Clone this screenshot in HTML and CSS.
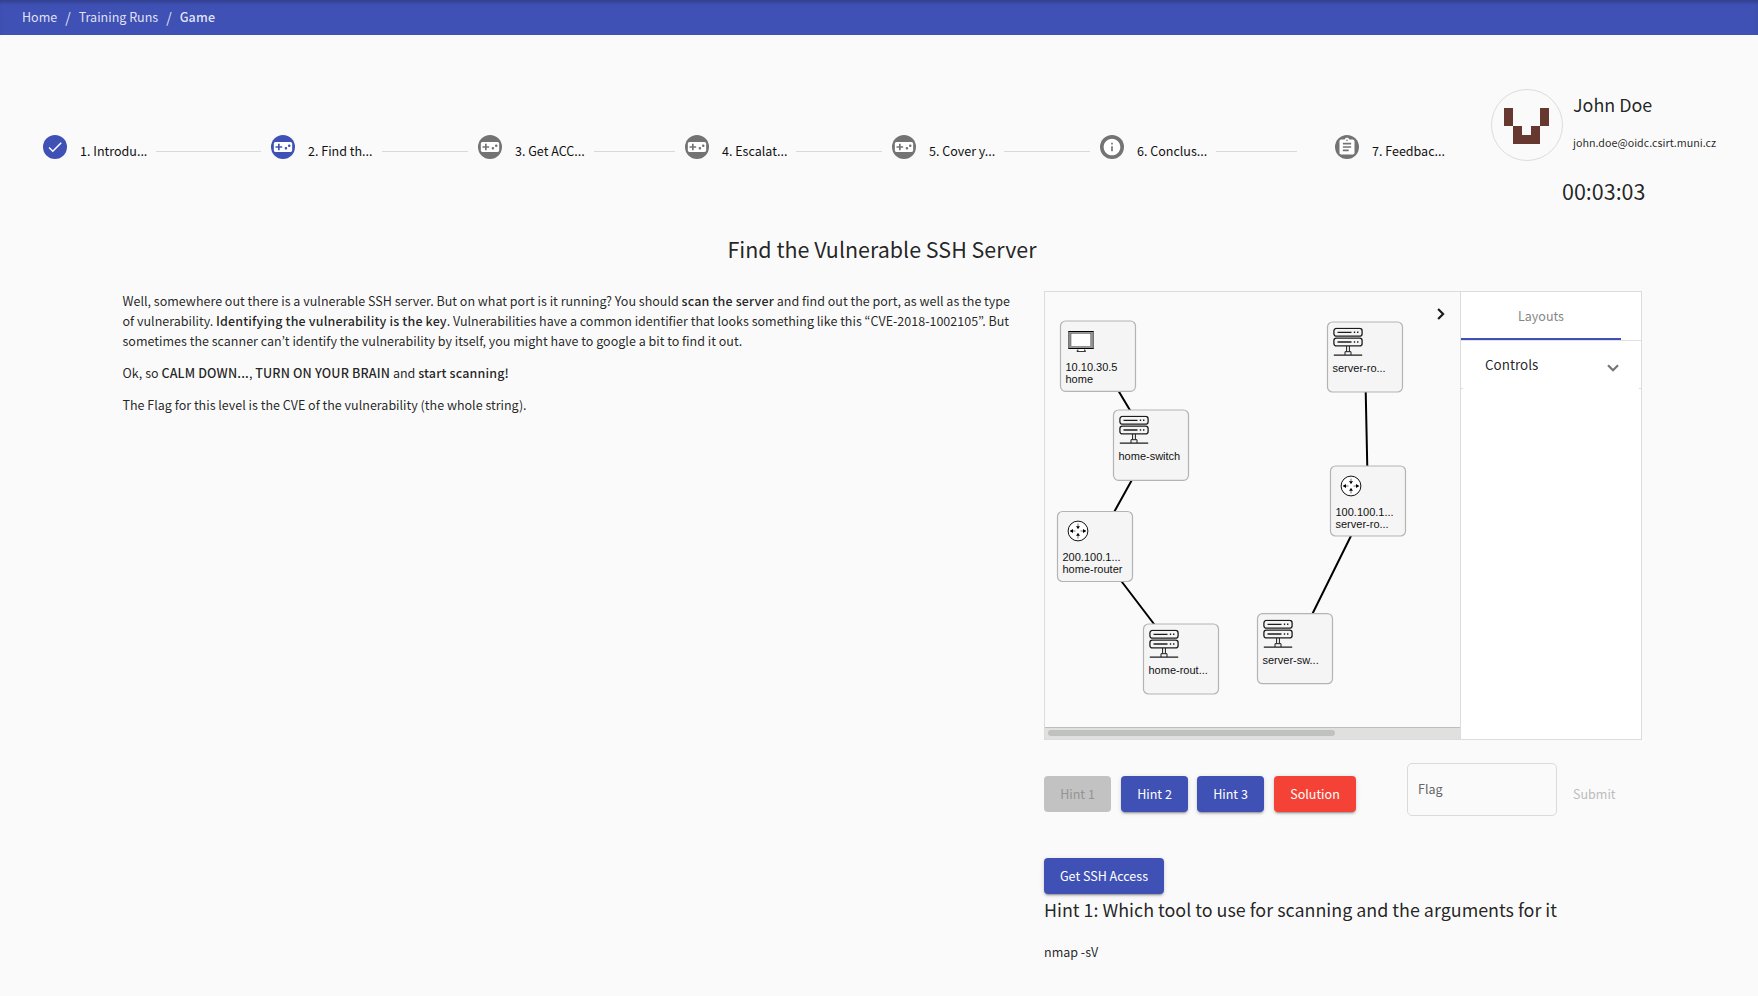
FILE: index.html
```html
<!DOCTYPE html>
<html lang="en">
<head>
<meta charset="utf-8">
<title>Training Run</title>
<link rel="stylesheet" href="styles.css">
</head>
<body>
<svg class="defs" width="0" height="0" aria-hidden="true">
  <symbol id="pad" viewBox="0 0 24 24"><path fill="currentColor" d="M21 6H3c-1.100 0-2 .9-2 2v8c0 1.100.9 2 2 2h18c1.100 0 2-.9 2-2V8c0-1.100-.9-2-2-2zm-10 7H8v3H6v-3H3v-2h3V8h2v3h3v2zm4.500 2c-.83 0-1.500-.67-1.500-1.500s.67-1.500 1.500-1.500 1.500.67 1.500 1.500-.67 1.500-1.500 1.500zm4-3c-.83 0-1.500-.67-1.500-1.500S18.670 9 19.500 9s1.500.67 1.500 1.500-.67 1.500-1.500 1.500z"/></symbol>
  <symbol id="info" viewBox="0 0 24 24"><path fill="currentColor" d="M12 2C6.480 2 2 6.480 2 12s4.480 10 10 10 10-4.480 10-10S17.520 2 12 2zm1 15h-2v-6h2v6zm0-8h-2V7h2v2z"/></symbol>
  <symbol id="clip" viewBox="0 0 24 24"><path fill="currentColor" d="M19 3h-4.180C14.400 1.840 13.300 1 12 1c-1.300 0-2.400.84-2.820 2H5c-1.100 0-2 .9-2 2v14c0 1.100.9 2 2 2h14c1.100 0 2-.9 2-2V5c0-1.100-.9-2-2-2zm-7 0c.55 0 1 .45 1 1s-.45 1-1 1-1-.45-1-1 .45-1 1-1zm2 14H7v-2h7v2zm3-4H7v-2h10v2zm0-4H7V7h10v2z"/></symbol>
  <symbol id="check" viewBox="0 0 24 24"><path fill="currentColor" d="M9 16.170L4.830 12l-1.420 1.410L9 19 21 7l-1.410-1.410z"/></symbol>
  <symbol id="switch" viewBox="0 0 30 29">
    <g fill="none" stroke="#1c1c1c" stroke-width="1.300">
      <rect x=".9" y=".9" width="28.200" height="7.800" rx="2.500"/>
      <rect x=".9" y="10.600" width="28.200" height="7.800" rx="2.500"/>
      <path d="M4.500 4.800h14M4.500 14.500h14M.8 27.700h28.400"/>
      <path stroke-width="1.400" d="M20.800 4.800h1.400M24 4.800h1.400M20.800 14.500h1.400M24 14.500h1.400"/>
      <path stroke-width="1" d="M13.600 18.500v5.500M16.400 18.500v5.500M12 27.500v-3.300h6v3.300"/>
    </g>
  </symbol>
  <symbol id="router" viewBox="0 0 22 22">
    <circle cx="11" cy="11" r="9.900" fill="#fff" stroke="#111"/>
    <path stroke="#777" stroke-width="1" d="M11 3.500v5M11 13.500v5M3.500 11h5M13.500 11h5"/>
    <path d="M9 6.200h4L11 9zM9 15.800h4L11 13zM6 8.900v4.200L2.700 11zM16 8.900v4.200l3.300-2.100z"/>
  </symbol>
</svg>

<nav class="crumbs"><span class="home">Home</span><i>/</i><span>Training Runs</span><i>/</i><b>Game</b></nav>

<header class="head">
  <ol class="stepper">
    <li class="step done"><span class="dot"><svg><use href="#check"/></svg></span><span class="label">1. Introdu...</span><span class="line"></span></li>
    <li class="step done"><span class="dot"><svg class="wide"><use href="#pad"/></svg></span><span class="label">2. Find th...</span><span class="line"></span></li>
    <li class="step"><span class="dot"><svg class="wide"><use href="#pad"/></svg></span><span class="label">3. Get ACC...</span><span class="line"></span></li>
    <li class="step"><span class="dot"><svg class="wide"><use href="#pad"/></svg></span><span class="label">4. Escalat...</span><span class="line"></span></li>
    <li class="step"><span class="dot"><svg class="wide"><use href="#pad"/></svg></span><span class="label">5. Cover y...</span><span class="line"></span></li>
    <li class="step before-last"><span class="dot"><svg class="wide"><use href="#info"/></svg></span><span class="label">6. Conclus...</span><span class="line"></span></li>
    <li class="step"><span class="dot"><svg class="wide"><use href="#clip"/></svg></span><span class="label">7. Feedbac...</span></li>
  </ol>
  <div class="account">
    <div class="user">
      <svg class="avatar" viewBox="0 0 72 72"><circle cx="36" cy="36" r="35.500" fill="none" stroke="#dcdcdc"/><path fill="#673830" d="M13 19h9v18h9v9h9v-9h9V19h9v18h-9v18H22V37h-9z"/></svg>
      <div class="who"><div class="name">John Doe</div><div class="mail">john.doe@oidc.csirt.muni.cz</div></div>
    </div>
    <div class="timer">00:03:03</div>
  </div>
</header>

<h1 class="title">Find the Vulnerable SSH Server</h1>

<main class="main">
  <article class="text">
    <p>Well, somewhere out there is a vulnerable SSH server. But on what port is it running? You should <b>scan the server</b> and find out the port, as well as the type<br>of vulnerability. <b>Identifying the vulnerability is the key</b>. Vulnerabilities have a common identifier that looks something like this “CVE-2018-1002105”. But<br>sometimes the scanner can’t identify the vulnerability by itself, you might have to google a bit to find it out.</p>
    <p>Ok, so <b>CALM DOWN...</b>, <b>TURN ON YOUR BRAIN</b> and <b>start scanning!</b></p>
    <p>The Flag for this level is the CVE of the vulnerability (the whole string).</p>
  </article>

  <section class="side">
    <div class="panel">
      <div class="graph">
        <svg class="topology" width="415" height="435" viewBox="1045 292 415 435">
          <g stroke="#000" stroke-width="2" fill="none">
            <path d="M1098 356.500L1151 445.500L1095 546.500L1181 659.500M1365 357.500L1368 501.500L1295 649"/>
          </g>
          <g class="boxes">
            <rect x="1060.500" y="321" width="75" height="70.300" rx="5"/>
            <rect x="1113.500" y="410" width="75" height="70.300" rx="5"/>
            <rect x="1057.500" y="511.500" width="75" height="70" rx="5"/>
            <rect x="1143.500" y="624" width="75" height="70" rx="5"/>
            <rect x="1257.500" y="613.700" width="75" height="70" rx="5"/>
            <rect x="1327.500" y="322" width="75" height="70" rx="5"/>
            <rect x="1330.500" y="466" width="75" height="70" rx="5"/>
          </g>
          <g>
            <rect x="1068.300" y="331" width="25.400" height="18" fill="#999"/>
            <path d="M1068.300 331.500h25.400M1068.300 348.500h25.400" stroke="#000"/>
            <path d="M1068.700 331v18M1093.300 331v18" stroke="#444" stroke-width=".7"/>
            <rect x="1071" y="333.300" width="19.800" height="13.400" fill="#fff" stroke="#444" stroke-width=".5"/>
            <path d="M1078 349.500v1.200h-1v.8h8.500v-.8h-1v-1.200" fill="#fff" stroke="#222" stroke-width=".9"/>
          </g>
          <use href="#switch" x="1119" y="415.500" width="30" height="29"/>
          <use href="#switch" x="1149" y="629.500" width="30" height="29"/>
          <use href="#switch" x="1263" y="619.500" width="30" height="29"/>
          <use href="#switch" x="1333" y="327.500" width="30" height="29"/>
          <use href="#router" x="1067" y="520" width="22" height="22"/>
          <use href="#router" x="1340" y="475" width="22" height="22"/>
          <g class="captions">
            <text x="1065.500" y="371">10.10.30.5</text><text x="1065.500" y="383">home</text>
            <text x="1118.500" y="460">home-switch</text>
            <text x="1062.500" y="561">200.100.1...</text><text x="1062.500" y="573">home-router</text>
            <text x="1148.500" y="674">home-rout...</text>
            <text x="1262.500" y="664">server-sw...</text>
            <text x="1332.500" y="372">server-ro...</text>
            <text x="1335.500" y="516">100.100.1...</text><text x="1335.500" y="528">server-ro...</text>
          </g>
          <path d="M1438.100 309l5 5l-5 5" fill="none" stroke="#1c1c1c" stroke-width="2.200"/>
        </svg>
        <div class="scroll"><div class="thumb"></div></div>
      </div>
      <aside class="tools">
        <div class="tabs"><div class="tab">Layouts</div></div>
        <div class="controls"><span>Controls</span><svg width="14" height="10" viewBox="0 0 14 10"><path d="M2 2.300L7 7.300l5-5" fill="none" stroke="#757575" stroke-width="2.200"/></svg></div>
      </aside>
    </div>
    <div class="actions">
      <button class="btn off h1">Hint 1</button>
      <button class="btn h2">Hint 2</button>
      <button class="btn h3">Hint 3</button>
      <button class="btn red">Solution</button>
      <div class="flag">Flag</div>
      <button class="submit">Submit</button>
    </div>
    <button class="btn ssh">Get SSH Access</button>
    <h2 class="hint">Hint 1: Which tool to use for scanning and the arguments for it</h2>
    <p class="cmd">nmap -sV</p>
  </section>
</main>
</body>
</html>
```
FILE: styles.css
```css
* { box-sizing: border-box; }
body {
  margin: 0;
  height: 996px;
  overflow: hidden;
  background: #fafafa;
  color: rgba(0, 0, 0, .87);
  font: 12.53px/20px "Noto Sans CJK KR", "Noto Sans CJK SC", sans-serif;
}
b { font-weight: 500; letter-spacing: .15px; }
.defs { display: block; height: 0; }

.crumbs {
  height: 35px;
  padding: 0 22px 2px;
  display: flex;
  align-items: center;
  background: #3f51b5;
  box-shadow: inset 0 4px 4px -2px rgba(0, 0, 0, .25);
  color: rgba(255, 255, 255, .85);
}
.crumbs i { width: 21.5px; text-align: center; font-style: normal; font-size: 14px; }

.head { display: flex; height: 198px; padding-left: 43px; }
.stepper {
  display: grid;
  grid-template-columns: 228px 207px 207px 207px 208px 235px 120px;
  width: 1412px;
  margin: 0;
  padding: 100px 0 0;
  list-style: none;
  color: #111;
}
.step { display: flex; align-items: flex-start; padding-right: 10px; }
.step:last-child { padding-right: 0; }
.before-last { padding-right: 38px; }
.dot {
  flex: none;
  width: 24px; height: 24px;
  margin-right: 13px;
  display: grid;
  place-items: center;
  border-radius: 50%;
  background: #737373;
  color: #fff;
}
.done .dot { background: #3f51b5; }
.dot svg { width: 18px; height: 18px; }
.dot svg.wide { width: 20px; height: 20px; }
.label { margin-top: 6px; white-space: nowrap; }
.line { flex: 1; height: 1px; margin: 16px 0 0 9px; background: #d9d9d9; }

.account { padding: 53px 0 0 36px; }
.user { display: flex; align-items: flex-start; gap: 10px; }
.avatar { width: 72px; height: 72px; margin-top: 1px; }
.name { font-size: 17.9px; line-height: 32px; }
.mail { margin-top: 13px; font-size: 10.74px; line-height: 20px; }
.timer { padding: 14px 0 0 71px; font-size: 21.48px; line-height: 31px; }

.title { margin: 0 0 0 6px; text-align: center; font-size: 21.48px; line-height: 31px; font-weight: 400; }

.main { display: flex; padding: 27px 0 0 122.5px; }
.text { width: 921.5px; white-space: nowrap; }
.text p { margin: 0 0 12px; }
.side { width: 598px; }

.panel { display: flex; height: 449px; border: 1px solid #dcdcdc; }
.graph { width: 415px; }
.topology { display: block; }
.boxes rect { fill: #f5f5f5; stroke: #b4b4b4; stroke-width: 1.200; }
.captions { font: 11px "Liberation Sans", Arial, sans-serif; fill: #111; }
.scroll { height: 12px; padding: 2px 3px 0; border-top: 1px solid #bdbfbd; background: #e0e0de; }
.thumb { width: 287px; height: 6px; border-radius: 3px; background: #c0c2c0; }
.tools { flex: 1; background: #fff; border-left: 1px solid #dcdcdc; }
.tabs { height: 49px; border-bottom: 1px solid #e0e0e0; }
.tab { width: 160px; height: 48px; padding-top: 14px; border-bottom: 2px solid #3f51b5; text-align: center; color: #868686; }
.controls {
  height: 48px;
  padding: 0 21px 2px 24px;
  display: flex;
  align-items: center;
  justify-content: space-between;
  font-size: 13.43px;
  background:
    linear-gradient(#dcdcdc, #dcdcdc) 0 100% / 2px 1px no-repeat,
    linear-gradient(#dcdcdc, #dcdcdc) 100% 100% / 2px 1px no-repeat;
}
.controls svg { margin-top: 7px; }

.actions { display: flex; align-items: flex-start; height: 95px; margin-top: 23px; }
button { font: inherit; border: 0; padding: 0; }
.btn {
  width: 67px;
  height: 36px;
  padding-bottom: 1px;
  margin-top: 13px;
  border-radius: 4px;
  background: #3f51b5;
  color: #fff;
  box-shadow: 0 3px 1px -2px rgba(0,0,0,.2), 0 2px 2px rgba(0,0,0,.14), 0 1px 5px rgba(0,0,0,.12);
}
.btn.off { background: #c2c2c2; color: #949494; box-shadow: none; }
.btn.h2 { margin-left: 10px; }
.btn.h3 { margin-left: 9px; }
.btn.red { width: 82px; margin-left: 10px; background: #f44336; }
.flag {
  width: 150px;
  height: 53px;
  margin-left: 51px;
  padding: 15px 10px 0;
  border: 1px solid #dadada;
  border-radius: 5px;
  color: #666;
}
.submit { height: 36px; margin: 13px 0 0 16px; padding-bottom: 1px; background: none; color: #bdbdbd; }
.btn.ssh { display: block; width: 120px; margin: 0; }
.hint { margin: 1px 0 0; font-size: 17.9px; line-height: 28px; font-weight: 400; white-space: nowrap; }
.cmd { margin: 19px 0 0; }
```
